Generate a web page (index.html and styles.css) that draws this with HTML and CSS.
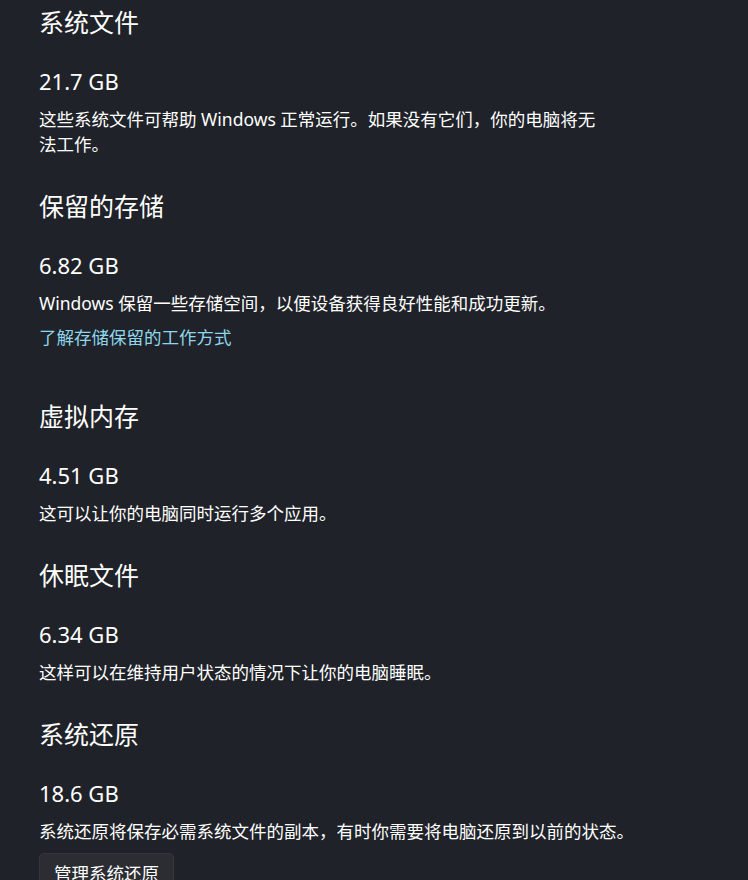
FILE: index.html
```html
<!DOCTYPE html>
<html lang="zh-CN">
<head>
<meta charset="utf-8">
<title>系统和保留</title>
<link rel="stylesheet" href="styles.css">
</head>
<body>
<main class="page">
  <section class="item">
    <h2 class="title">系统文件</h2>
    <div class="size">21.7 GB</div>
    <p class="desc desc-narrow">这些系统文件可帮助 Windows 正常运行。如果没有它们，你的电脑将无法工作。</p>
  </section>
  <section class="item">
    <h2 class="title">保留的存储</h2>
    <div class="size">6.82 GB</div>
    <p class="desc">Windows 保留一些存储空间，以便设备获得良好性能和成功更新。</p>
    <a class="link" href="#">了解存储保留的工作方式</a>
  </section>
  <section class="item">
    <h2 class="title">虚拟内存</h2>
    <div class="size">4.51 GB</div>
    <p class="desc">这可以让你的电脑同时运行多个应用。</p>
  </section>
  <section class="item">
    <h2 class="title">休眠文件</h2>
    <div class="size">6.34 GB</div>
    <p class="desc">这样可以在维持用户状态的情况下让你的电脑睡眠。</p>
  </section>
  <section class="item">
    <h2 class="title">系统还原</h2>
    <div class="size">18.6 GB</div>
    <p class="desc">系统还原将保存必需系统文件的副本，有时你需要将电脑还原到以前的状态。</p>
    <button class="btn" type="button">管理系统还原</button>
  </section>
</main>
</body>
</html>
```

FILE: styles.css
```css
html, body {
  margin: 0;
  padding: 0;
  background: #1f2228;
  height: 100%;
  overflow: hidden;
}
body {
  font-family: "Noto Sans", "Noto Sans CJK SC", sans-serif;
  color: #ffffff;
}
.page {
  padding: 4px 0 0 39px;
  display: flex;
  flex-direction: column;
  gap: 31px;
}
.item {
  display: flex;
  flex-direction: column;
  align-items: flex-start;
}
.title {
  margin: 0;
  font-family: "Noto Sans CJK SC", sans-serif;
  font-size: 25px;
  font-weight: 400;
  line-height: 35px;
}
.size {
  margin-top: 27px;
  font-size: 22px;
  line-height: 30px;
}
.desc {
  margin: 11px 0 0;
  font-size: 17.5px;
  line-height: 25px;
  max-width: 640px;
}
.desc-narrow {
  max-width: 563px;
}
.link {
  margin-top: 9px;
  font-size: 17.5px;
  line-height: 25px;
  color: #8fd6ec;
  text-decoration: none;
  padding-bottom: 17px;
}
.btn {
  margin-top: 9px;
  font-family: "Noto Sans CJK SC", sans-serif;
  font-size: 17.5px;
  line-height: 25px;
  color: #ffffff;
  background: #2b2d32;
  border: 1px solid #34373c;
  border-bottom-color: #2e3034;
  border-radius: 5px;
  padding: 6px 14px;
}
```
